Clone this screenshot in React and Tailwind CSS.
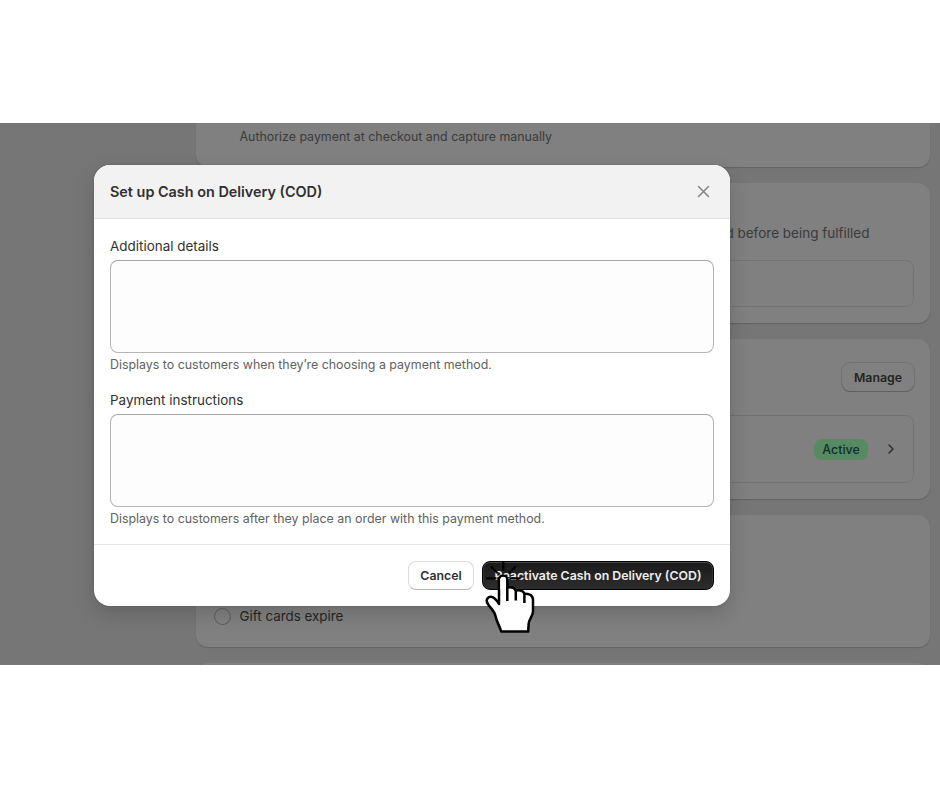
import React from "react";

const card = "w-[734px] shrink-0 rounded-xl bg-[#808080] shadow-[0_1px_1px_0_#636363,0_0_0_1px_#757575]";

function Field({ label, help }) {
  return (
    <div>
      <div className="h-5 text-[13.45px] leading-5 text-[#303030]">{label}</div>
      <div className="mt-1 h-[93px] rounded-lg border border-[#b5b5b5] border-t-[#a5a5a5] bg-[#fdfdfd]" />
      <div className="mt-[2px] h-5 text-[12.4px] leading-5 text-[#616161]">{help}</div>
    </div>
  );
}

function Pointer() {
  return (
    <svg className="absolute left-[480px] top-[432px]" width="64" height="84" viewBox="0 0 64 84" fill="none">
      <g stroke="#000" strokeWidth="2.2">
        <path d="M23.3 6.500V16M11 11.500l6.500 6.500M35.500 11.500l-6.500 6.500M6 23.300h10.500M30 23.300h10.500" />
      </g>
      <path
        d="M19 49V24.200a4.200 4.200 0 0 1 8.300 0V32.500c3.700-.8 7.300 0 8.500 3 3.800-.8 7.400.2 8.600 3.200 5-.5 8.600 1.800 8.600 6.300V56.500c0 4.500-4 7.500-4.400 12.500l-.4 7.500H21.200c-1.500-5.500-4.800-10-5.700-15.500-1-4.800-4.500-7.300-7.500-11.800-1.500-2.300-1.800-4.700-.1-6.400 1.700-1.800 4.800-1.300 6.700.6 2 2 3.300 3.300 4.400 5.600z"
        fill="#fff" stroke="#000" strokeWidth="2.500" strokeLinejoin="round"
      />
      <path d="M27.300 32v14M35.800 35v10.500M44.400 38v10" stroke="#000" strokeWidth="2.500" />
      <path d="M20.300 34V24.200a2.900 2.900 0 0 1 5.700 0V34z" fill="#fff" />
    </svg>
  );
}

export default function App() {
  return (
    <div className="h-[788px] w-[940px] overflow-hidden bg-white pt-[123px] font-['Inter',sans-serif]">
      <div className="relative h-[542px] overflow-hidden bg-[#767676]">
        <div className="flex flex-col gap-4 pl-[196px]">
          <div className={`${card} h-11 rounded-t-none pl-[43.5px] pt-1 text-[12.4px] leading-[19px] text-[#3b3b3b]`}>
            Authorize payment at checkout and capture manually
          </div>
          <div className={`${card} h-[140px] px-4 pt-10`}>
            <div className="pr-[44.5px] text-right text-[13.5px] leading-5 text-[#3b3b3b]">Require payment to be captured before being fulfilled</div>
            <div className="mt-[17px] h-[47px] rounded-lg border border-[#747474]" />
          </div>
          <div className={`${card} h-[160px] px-4 pt-6`}>
            <div className="flex justify-end">
              <div className="flex h-[28px] w-[72px] items-center justify-center rounded-lg pt-[2px] text-[12.3px] font-semibold text-[#252525] shadow-[0_1px_0_0_#616161,0_0_0_1px_#727272]">Manage</div>
            </div>
            <div className="mt-6 flex h-[68px] items-center justify-end rounded-lg border border-[#737373] pr-[14px]">
              <div className="flex h-[21px] w-[54px] items-center justify-center rounded-lg bg-[#578963] pt-[2px] text-[12.4px] font-medium text-[#0a3029]">Active</div>
              <svg className="ml-[15px]" width="16" height="16" viewBox="0 0 16 16" fill="none" stroke="#303030" strokeWidth="1.6" strokeLinecap="round" strokeLinejoin="round">
                <path d="M6 4l4 4-4 4" />
              </svg>
            </div>
          </div>
          <div className={`${card} flex h-[132px] items-end pb-[21px] pl-[17.5px]`}>
            <div className="flex items-center gap-[9px] text-[13.4px] leading-5 text-[#252525]">
              <span className="h-[17px] w-[17px] rounded-full border border-[#5d5d5d]" />
              Gift cards expire
            </div>
          </div>
          <div className={`${card} h-20`} />
        </div>

        <div className="absolute left-[94px] top-[42px] flex h-[441px] w-[636px] flex-col overflow-hidden rounded-2xl bg-white shadow-[0_8px_20px_rgba(0,0,0,0.16),0_0_2px_rgba(0,0,0,0.2)]">
          <div className="flex h-[54px] items-center justify-between border-b border-[#e1e1e1] bg-[#f2f2f2] px-4">
            <div className="text-[14.4px] font-semibold text-[#303030]">Set up Cash on Delivery (COD)</div>
            <svg className="mr-[4.500px]" width="13" height="13" viewBox="0 0 13 13" fill="none" stroke="#858585" strokeWidth="1.5" strokeLinecap="round">
              <path d="M1.500 1.500l10 10M11.500 1.500l-10 10" />
            </svg>
          </div>
          <div className="flex flex-1 flex-col gap-[15px] px-4 pt-[17px]">
            <Field label="Additional details" help="Displays to customers when they’re choosing a payment method." />
            <Field label="Payment instructions" help="Displays to customers after they place an order with this payment method." />
          </div>
          <div className="flex h-[62px] items-start justify-end gap-2 border-t border-[#e6e6e6] px-4 pt-4">
            <div className="flex h-[29px] w-[66px] items-center justify-center rounded-lg border border-[#dcdcdc] border-b-[#b5b5b5] pt-px text-[12.3px] font-semibold text-[#303030]">Cancel</div>
            <div className="flex h-[29px] w-[232px] items-center justify-center whitespace-nowrap rounded-lg border border-black bg-gradient-to-b from-[#1a1a1a] to-[#2d2d2d] pt-px text-[12.35px] font-semibold text-[#eee] shadow-[inset_0_1px_0_#484848,inset_1px_0_0_#343434,inset_-1px_0_0_#343434]">Reactivate Cash on Delivery (COD)</div>
          </div>
        </div>
        <Pointer />
      </div>
    </div>
  );
}
